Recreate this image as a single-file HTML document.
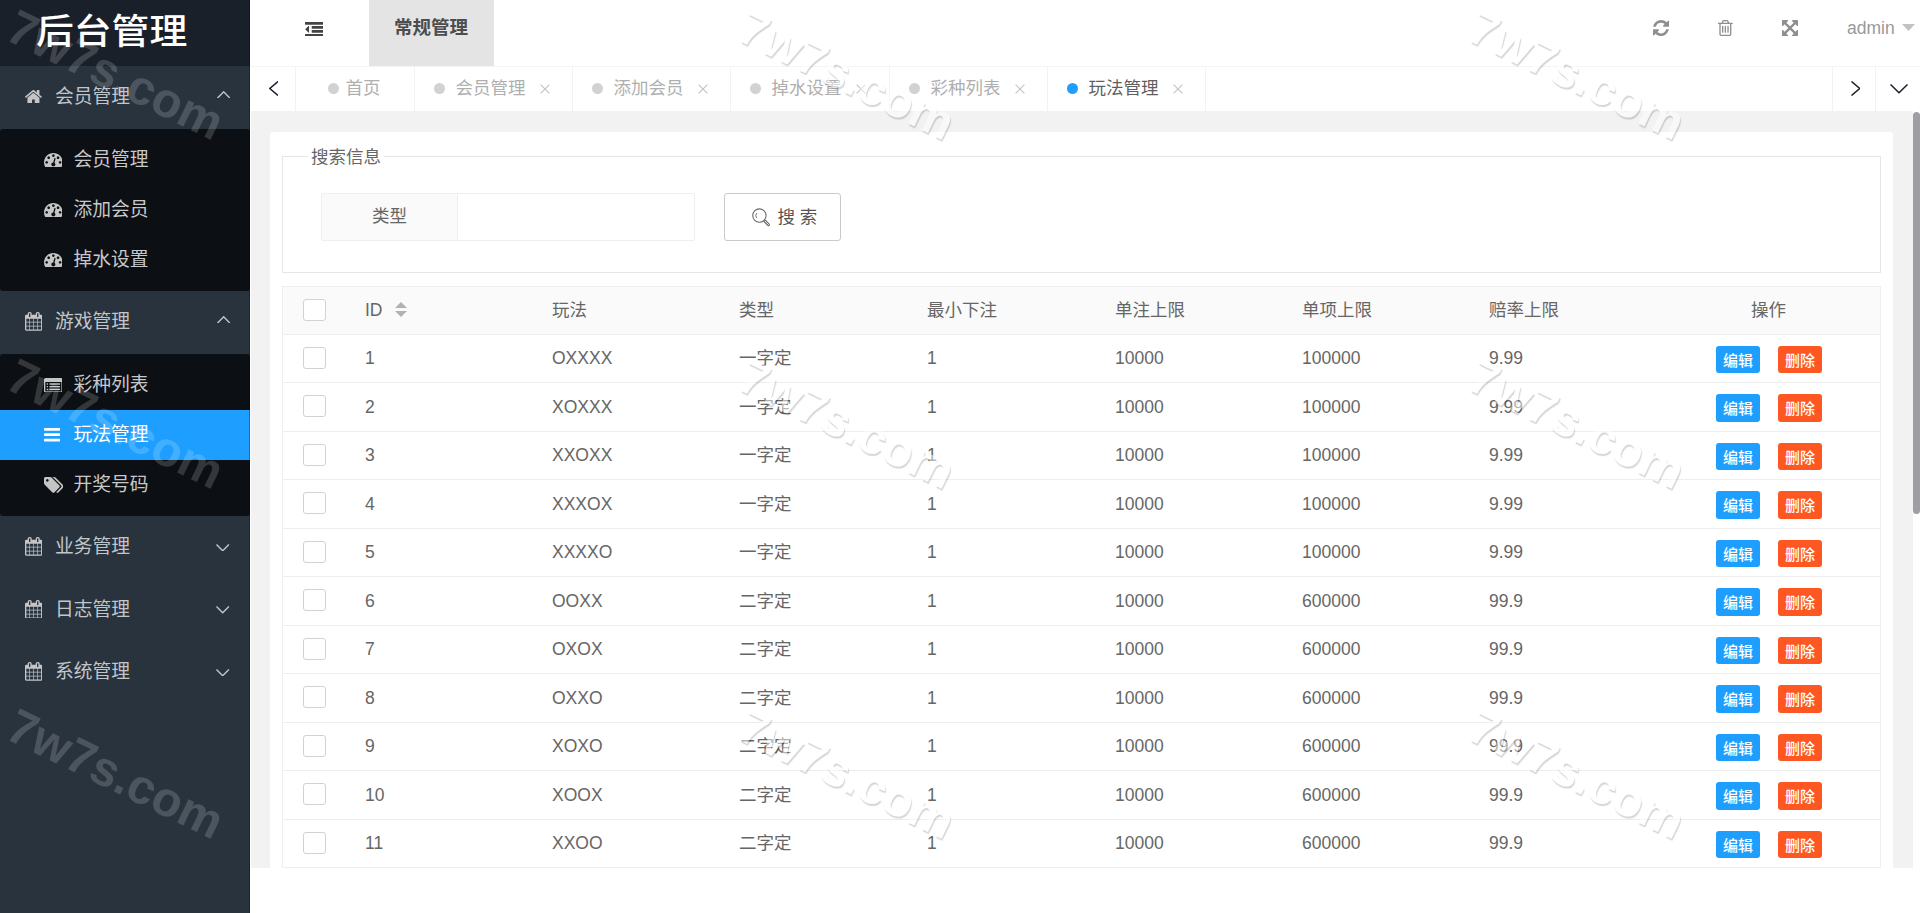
<!DOCTYPE html>
<html lang="zh-CN">
<head>
<meta charset="utf-8">
<title>后台管理</title>
<style>
*{box-sizing:border-box;margin:0;padding:0}
html,body{width:1920px;height:913px;overflow:hidden;background:#fff}
body{position:relative;font-family:"Liberation Sans","Noto Sans CJK SC",sans-serif;font-size:17.5px;color:#666}
.abs{position:absolute}
svg{display:block}
/* ---------- sidebar ---------- */
#side{position:absolute;left:0;top:0;width:250px;height:913px;background:#28333e;overflow:hidden}
#logo{position:absolute;left:0;top:0;width:250px;height:66px;background:#1a2029}
#logo span{position:absolute;left:36px;top:4.5px;font-size:37.8px;line-height:54px;color:#fff;white-space:nowrap;font-weight:500;transform:scaleY(.93);transform-origin:50% 50%}
#edge{position:absolute;left:249px;top:0;width:1px;height:913px;background:rgba(0,0,0,.3);z-index:3}
.nav1{position:absolute;left:0;width:250px;height:62.5px;color:#c3c6c9;font-size:18.75px;line-height:62.5px}
.nav1 .txt{position:absolute;left:55px;top:0;white-space:nowrap}
.nav1 .ico{position:absolute}
.nav1 .chev{position:absolute;left:217px;top:25px}
.sub{position:absolute;left:0;width:250px;height:162.5px;background:#0c0f13;border-radius:3px}
.nav2{position:absolute;left:0;width:250px;height:50px;color:#c8c8c9;font-size:18.75px;line-height:50px}
.nav2 .txt{position:absolute;left:73.5px;top:0;white-space:nowrap}
.nav2 .ico{position:absolute}
.nav2.on{background:#1e9fff;color:#fff}
/* ---------- header ---------- */
#head{position:absolute;left:250px;top:0;width:1670px;height:66px;background:#fff}
#headline{position:absolute;left:250px;top:66px;width:1670px;height:1px;background:#f4f4f4}
#topnav{position:absolute;left:118.5px;top:0;width:125px;height:66px;background:#e4e4e4;color:#4d4d4d;font-weight:bold;font-size:18.5px;line-height:56px;text-align:center}
#user{position:absolute;left:1597px;top:0;line-height:56px;color:#999;font-size:17.5px}
/* ---------- tabs ---------- */
#tabs{position:absolute;left:251px;top:67px;width:1669px;height:44px;background:#fff}
.tab{position:absolute;top:0;height:44px;border-right:1px solid #f2f2f2;color:#afafaf;font-size:17.5px;line-height:42px}
.tab .dot{position:absolute;top:16px;width:11px;height:11px;border-radius:50%;background:#d2d2d2}
.tab .t{position:absolute;top:0;white-space:nowrap}
.tab .x{position:absolute;top:17px}
.tab.on{color:#5f5f5f}
.tab.on .dot{background:#1e9fff}
.tctl{position:absolute;top:0;height:44px}
/* ---------- content ---------- */
#main{position:absolute;left:251px;top:111px;width:1662px;height:757px;background:#f2f2f2;overflow:hidden}
#card{position:absolute;left:19px;top:21px;width:1623px;height:800px;background:#fff;border-radius:3px}
#fs{position:absolute;left:12px;top:24px;width:1599px;height:117px;border:1px solid #e6e6e6}
#legend{position:absolute;left:38px;top:10.3px;padding:0 3px;background:#fff;font-size:17.5px;line-height:30px;color:#666}
#lab{position:absolute;left:51px;top:61px;width:137px;height:48px;background:#fafafa;border:1px solid #eee;border-radius:2px 0 0 2px;text-align:center;line-height:44px;color:#666}
#inp{position:absolute;left:187px;top:61px;width:238px;height:48px;background:#fff;border:1px solid #eee;border-radius:0 2px 2px 0}
#sbtn{position:absolute;left:454px;top:61px;width:117px;height:48px;background:#fff;border:1px solid #c9c9c9;border-radius:3px;color:#555}
#sbtn .t{position:absolute;left:52.5px;top:0.6px;line-height:45px;font-size:17.5px;white-space:pre}
/* table */
#tbl{position:absolute;left:12px;top:154px;width:1599px;border:1px solid #eee}
.tr{position:relative;height:48px;border-bottom:1px solid #eee;font-size:17.5px;line-height:46px;color:#666;background:#fff}
.tr.h{background:#fafafa}.tr.t{height:49px}
.tr span{position:absolute;top:0;white-space:nowrap}
.cb{position:absolute;left:20px;top:12px;width:23px;height:22px;border:1px solid #d2d2d2;border-radius:3px;background:#fff}
.c1{left:82px}.c2{left:269px}.c3{left:456px}.c4{left:644px}.c5{left:832px}.c6{left:1019px}.c7{left:1206px}
.btn{font-weight:500;position:absolute;top:11px;width:44px;height:27px;border-radius:3px;color:#fff;font-size:15px;line-height:29.4px;text-align:center}.tr.t .btn{height:28px;line-height:30.4px}.tr.t span{top:1px}
.be{left:1433px;background:#1e9fff}
.bd{left:1495px;background:#ff5722}
/* scrollbar */
#sbar{position:absolute;left:1913px;top:111px;width:7px;height:757px;background:#fff}
#thumb{position:absolute;left:0;top:1px;width:7px;height:402px;background:#9f9fa3;border-radius:4px 4px 4px 4px}
/* watermark */
.wm{position:absolute;font:bold 48.8px "Liberation Sans",sans-serif;line-height:50px;white-space:nowrap;transform-origin:0 0;transform:rotate(26deg);pointer-events:none}
.wm.d{color:rgba(255,255,255,.17)}
.wm.l{color:#fff;text-shadow:1.5px 1.5px 1px rgba(0,0,0,.32);opacity:.5}
</style>
</head>
<body>
<div id="side">
<div id="logo"><span>后台管理</span></div><div id="edge"></div>
<div class="nav1" style="top:66px"><svg class="ico" style="position:absolute;left:25.00px;top:23.69px" width="16.87" height="13.42" viewBox="25.9 253.0 1612.2 1283.0"><path d="M1408 992v480q0 26-19 45t-45 19h-384v-384h-256v384h-384q-26 0-45-19t-19-45v-480q0-1 .5-3t.5-3l575-474 575 474q1 2 1 6zm223-69l-62 74q-8 9-21 11h-3q-13 0-21-7l-692-577-692 577q-12 8-24 7-13-2-21-11l-62-74q-8-10-7-23.500t11-21.500l719-599q32-26 76-26t76 26l244 204v-195q0-14 9-23t23-9h192q14 0 23 9t9 23v408l219 182q10 8 11 21.500t-7 23.500z" fill="#c3c5c8"/></svg><span class="txt">会员管理</span><svg style="position:absolute;left:216.6px;top:24.9px" width="13.4" height="7.6" viewBox="0 0 13.4 7.6"><polyline points="0.5,7.1 6.7,0.8 12.9,7.1" fill="none" stroke="#c3c5c8" stroke-width="1.4" stroke-linejoin="miter"/></svg></div>
<div class="nav1" style="top:291px"><svg class="ico" style="position:absolute;left:24.70px;top:21.02px" width="17.41" height="18.75" viewBox="64.0 0.0 1664.0 1792.0"><path d="M192 1664h288v-288h-288v288zm352 0h320v-288h-320v288zm-352-352h288v-320h-288v320zm352 0h320v-320h-320v320zm-352-384h288v-288h-288v288zm736 736h320v-288h-320v288zm-384-736h320v-288h-320v288zm768 736h288v-288h-288v288zm-384-352h320v-320h-320v320zm-352-864v-288q0-13-9.500-22.500t-22.500-9.500h-64q-13 0-22.500 9.500t-9.500 22.500v288q0 13 9.500 22.500t22.500 9.500h64q13 0 22.500-9.500t9.500-22.500zm736 864h288v-320h-288v320zm-384-384h320v-288h-320v288zm384 0h288v-288h-288v288zm32-480v-288q0-13-9.500-22.500t-22.500-9.500h-64q-13 0-22.500 9.500t-9.500 22.500v288q0 13 9.500 22.500t22.500 9.500h64q13 0 22.500-9.500t9.500-22.500zm384-64v1280q0 52-38 90t-90 38h-1408q-52 0-90-38t-38-90v-1280q0-52 38-90t90-38h128v-96q0-66 47-113t113-47h64q66 0 113 47t47 113v96h384v-96q0-66 47-113t113-47h64q66 0 113 47t47 113v96h128q52 0 90 38t38 90z" fill="#c3c5c8"/></svg><span class="txt">游戏管理</span><svg style="position:absolute;left:216.6px;top:24.9px" width="13.4" height="7.6" viewBox="0 0 13.4 7.6"><polyline points="0.5,7.1 6.7,0.8 12.9,7.1" fill="none" stroke="#c3c5c8" stroke-width="1.4" stroke-linejoin="miter"/></svg></div>
<div class="nav1" style="top:516px"><svg class="ico" style="position:absolute;left:24.70px;top:21.02px" width="17.41" height="18.75" viewBox="64.0 0.0 1664.0 1792.0"><path d="M192 1664h288v-288h-288v288zm352 0h320v-288h-320v288zm-352-352h288v-320h-288v320zm352 0h320v-320h-320v320zm-352-384h288v-288h-288v288zm736 736h320v-288h-320v288zm-384-736h320v-288h-320v288zm768 736h288v-288h-288v288zm-384-352h320v-320h-320v320zm-352-864v-288q0-13-9.500-22.500t-22.500-9.500h-64q-13 0-22.500 9.500t-9.500 22.500v288q0 13 9.500 22.500t22.500 9.500h64q13 0 22.500-9.500t9.500-22.500zm736 864h288v-320h-288v320zm-384-384h320v-288h-320v288zm384 0h288v-288h-288v288zm32-480v-288q0-13-9.500-22.500t-22.500-9.500h-64q-13 0-22.500 9.500t-9.500 22.500v288q0 13 9.500 22.500t22.500 9.500h64q13 0 22.500-9.500t9.500-22.500zm384-64v1280q0 52-38 90t-90 38h-1408q-52 0-90-38t-38-90v-1280q0-52 38-90t90-38h128v-96q0-66 47-113t113-47h64q66 0 113 47t47 113v96h384v-96q0-66 47-113t113-47h64q66 0 113 47t47 113v96h128q52 0 90 38t38 90z" fill="#c3c5c8"/></svg><span class="txt">业务管理</span><svg style="position:absolute;left:216.2px;top:27.6px" width="13.4" height="7.6" viewBox="0 0 13.4 7.6"><polyline points="0.5,0.5 6.7,6.8 12.9,0.5" fill="none" stroke="#c3c5c8" stroke-width="1.4" stroke-linejoin="miter"/></svg></div>
<div class="nav1" style="top:578.5px"><svg class="ico" style="position:absolute;left:24.70px;top:21.02px" width="17.41" height="18.75" viewBox="64.0 0.0 1664.0 1792.0"><path d="M192 1664h288v-288h-288v288zm352 0h320v-288h-320v288zm-352-352h288v-320h-288v320zm352 0h320v-320h-320v320zm-352-384h288v-288h-288v288zm736 736h320v-288h-320v288zm-384-736h320v-288h-320v288zm768 736h288v-288h-288v288zm-384-352h320v-320h-320v320zm-352-864v-288q0-13-9.500-22.500t-22.500-9.500h-64q-13 0-22.500 9.500t-9.500 22.500v288q0 13 9.500 22.500t22.500 9.500h64q13 0 22.500-9.500t9.500-22.500zm736 864h288v-320h-288v320zm-384-384h320v-288h-320v288zm384 0h288v-288h-288v288zm32-480v-288q0-13-9.500-22.500t-22.500-9.500h-64q-13 0-22.500 9.500t-9.500 22.500v288q0 13 9.500 22.500t22.500 9.500h64q13 0 22.500-9.500t9.500-22.500zm384-64v1280q0 52-38 90t-90 38h-1408q-52 0-90-38t-38-90v-1280q0-52 38-90t90-38h128v-96q0-66 47-113t113-47h64q66 0 113 47t47 113v96h384v-96q0-66 47-113t113-47h64q66 0 113 47t47 113v96h128q52 0 90 38t38 90z" fill="#c3c5c8"/></svg><span class="txt">日志管理</span><svg style="position:absolute;left:216.2px;top:27.6px" width="13.4" height="7.6" viewBox="0 0 13.4 7.6"><polyline points="0.5,0.5 6.7,6.8 12.9,0.5" fill="none" stroke="#c3c5c8" stroke-width="1.4" stroke-linejoin="miter"/></svg></div>
<div class="nav1" style="top:641px"><svg class="ico" style="position:absolute;left:24.70px;top:21.02px" width="17.41" height="18.75" viewBox="64.0 0.0 1664.0 1792.0"><path d="M192 1664h288v-288h-288v288zm352 0h320v-288h-320v288zm-352-352h288v-320h-288v320zm352 0h320v-320h-320v320zm-352-384h288v-288h-288v288zm736 736h320v-288h-320v288zm-384-736h320v-288h-320v288zm768 736h288v-288h-288v288zm-384-352h320v-320h-320v320zm-352-864v-288q0-13-9.500-22.500t-22.500-9.500h-64q-13 0-22.500 9.500t-9.500 22.500v288q0 13 9.500 22.500t22.500 9.500h64q13 0 22.500-9.500t9.500-22.500zm736 864h288v-320h-288v320zm-384-384h320v-288h-320v288zm384 0h288v-288h-288v288zm32-480v-288q0-13-9.500-22.500t-22.500-9.500h-64q-13 0-22.500 9.500t-9.500 22.500v288q0 13 9.500 22.500t22.500 9.500h64q13 0 22.500-9.500t9.500-22.500zm384-64v1280q0 52-38 90t-90 38h-1408q-52 0-90-38t-38-90v-1280q0-52 38-90t90-38h128v-96q0-66 47-113t113-47h64q66 0 113 47t47 113v96h384v-96q0-66 47-113t113-47h64q66 0 113 47t47 113v96h128q52 0 90 38t38 90z" fill="#c3c5c8"/></svg><span class="txt">系统管理</span><svg style="position:absolute;left:216.2px;top:27.6px" width="13.4" height="7.6" viewBox="0 0 13.4 7.6"><polyline points="0.5,0.5 6.7,6.8 12.9,0.5" fill="none" stroke="#c3c5c8" stroke-width="1.4" stroke-linejoin="miter"/></svg></div>
<div class="sub" style="top:128.5px"><div class="nav2" style="top:6.25px"><svg class="ico" style="position:absolute;left:43.50px;top:17.83px" width="18.75" height="14.73" viewBox="0.0 256.0 1792.0 1408.0"><path d="M384 1152q0-53-37.500-90.500t-90.500-37.500-90.500 37.500-37.500 90.500 37.500 90.500 90.500 37.500 90.500-37.500 37.500-90.500zm192-448q0-53-37.500-90.500t-90.500-37.500-90.500 37.500-37.500 90.500 37.500 90.500 90.500 37.500 90.500-37.500 37.500-90.500zm428 481l101-382q6-26-7.500-48.500t-38.500-29.500-48 6.500-30 39.500l-101 382q-60 5-107 43.500t-63 98.500q-20 77 20 146t117 89 146-20 89-117q16-60-6-117t-72-91zm660-33q0-53-37.500-90.500t-90.500-37.500-90.500 37.500-37.500 90.500 37.500 90.500 90.500 37.500 90.500-37.500 37.500-90.500zm-640-640q0-53-37.500-90.500t-90.500-37.500-90.500 37.500-37.500 90.500 37.500 90.500 90.500 37.500 90.500-37.500 37.500-90.500zm448 192q0-53-37.500-90.500t-90.500-37.500-90.500 37.500-37.500 90.500 37.500 90.500 90.500 37.500 90.500-37.500 37.500-90.500zm320 448q0 261-141 483-19 29-54 29h-1402q-35 0-54-29-141-221-141-483 0-182 71-348t191-286 286-191 348-71 348 71 286 191 191 286 71 348z" fill="#c6c5c5"/></svg><span class="txt">会员管理</span></div><div class="nav2" style="top:56.25px"><svg class="ico" style="position:absolute;left:43.50px;top:17.83px" width="18.75" height="14.73" viewBox="0.0 256.0 1792.0 1408.0"><path d="M384 1152q0-53-37.500-90.500t-90.500-37.500-90.500 37.500-37.500 90.500 37.500 90.500 90.500 37.500 90.500-37.500 37.500-90.500zm192-448q0-53-37.500-90.500t-90.500-37.500-90.500 37.500-37.500 90.500 37.500 90.500 90.500 37.500 90.500-37.500 37.500-90.500zm428 481l101-382q6-26-7.500-48.500t-38.500-29.500-48 6.500-30 39.500l-101 382q-60 5-107 43.500t-63 98.500q-20 77 20 146t117 89 146-20 89-117q16-60-6-117t-72-91zm660-33q0-53-37.500-90.500t-90.500-37.500-90.500 37.500-37.500 90.500 37.500 90.500 90.500 37.500 90.500-37.500 37.500-90.500zm-640-640q0-53-37.500-90.500t-90.500-37.500-90.500 37.500-37.500 90.500 37.500 90.500 90.500 37.500 90.500-37.500 37.500-90.500zm448 192q0-53-37.500-90.500t-90.500-37.500-90.500 37.500-37.500 90.500 37.500 90.500 90.500 37.500 90.500-37.500 37.500-90.500zm320 448q0 261-141 483-19 29-54 29h-1402q-35 0-54-29-141-221-141-483 0-182 71-348t191-286 286-191 348-71 348 71 286 191 191 286 71 348z" fill="#c6c5c5"/></svg><span class="txt">添加会员</span></div><div class="nav2" style="top:106.25px"><svg class="ico" style="position:absolute;left:43.50px;top:17.83px" width="18.75" height="14.73" viewBox="0.0 256.0 1792.0 1408.0"><path d="M384 1152q0-53-37.500-90.500t-90.500-37.500-90.500 37.500-37.500 90.500 37.500 90.500 90.500 37.500 90.500-37.500 37.500-90.500zm192-448q0-53-37.500-90.500t-90.500-37.500-90.500 37.500-37.500 90.500 37.500 90.500 90.500 37.500 90.500-37.500 37.500-90.500zm428 481l101-382q6-26-7.500-48.500t-38.500-29.500-48 6.500-30 39.500l-101 382q-60 5-107 43.500t-63 98.500q-20 77 20 146t117 89 146-20 89-117q16-60-6-117t-72-91zm660-33q0-53-37.500-90.500t-90.500-37.500-90.500 37.500-37.500 90.500 37.500 90.500 90.500 37.500 90.500-37.500 37.500-90.500zm-640-640q0-53-37.500-90.500t-90.500-37.500-90.500 37.500-37.500 90.500 37.500 90.500 90.500 37.500 90.500-37.500 37.500-90.500zm448 192q0-53-37.500-90.500t-90.500-37.500-90.500 37.500-37.500 90.500 37.500 90.500 90.500 37.500 90.500-37.500 37.500-90.500zm320 448q0 261-141 483-19 29-54 29h-1402q-35 0-54-29-141-221-141-483 0-182 71-348t191-286 286-191 348-71 348 71 286 191 191 286 71 348z" fill="#c6c5c5"/></svg><span class="txt">掉水设置</span></div></div>
<div class="sub" style="top:353.5px"><div class="nav2" style="top:6.25px"><svg class="ico" style="position:absolute;left:43.50px;top:17.83px" width="18.75" height="14.73" viewBox="0.0 128.0 1792.0 1408.0"><path d="M384 1184v64q0 13-9.500 22.500t-22.500 9.500h-64q-13 0-22.500-9.500t-9.500-22.500v-64q0-13 9.500-22.500t22.500-9.500h64q13 0 22.500 9.500t9.500 22.500zm0-256v64q0 13-9.500 22.500t-22.500 9.500h-64q-13 0-22.500-9.500t-9.500-22.500v-64q0-13 9.500-22.500t22.500-9.500h64q13 0 22.500 9.500t9.500 22.500zm0-256v64q0 13-9.500 22.500t-22.500 9.500h-64q-13 0-22.500-9.500t-9.500-22.500v-64q0-13 9.500-22.500t22.500-9.500h64q13 0 22.500 9.500t9.500 22.500zm1152 512v64q0 13-9.500 22.500t-22.500 9.500h-960q-13 0-22.500-9.500t-9.500-22.500v-64q0-13 9.500-22.500t22.500-9.500h960q13 0 22.500 9.500t9.500 22.500zm0-256v64q0 13-9.500 22.500t-22.500 9.500h-960q-13 0-22.500-9.500t-9.500-22.500v-64q0-13 9.500-22.500t22.500-9.500h960q13 0 22.500 9.500t9.500 22.500zm0-256v64q0 13-9.500 22.500t-22.500 9.500h-960q-13 0-22.500-9.500t-9.500-22.500v-64q0-13 9.500-22.500t22.500-9.500h960q13 0 22.500 9.500t9.500 22.500zm128 704v-832q0-13-9.500-22.500t-22.500-9.500h-1472q-13 0-22.500 9.500t-9.500 22.500v832q0 13 9.500 22.500t22.500 9.500h1472q13 0 22.500-9.500t9.500-22.500zm128-1088v1088q0 66-47 113t-113 47h-1472q-66 0-113-47t-47-113v-1088q0-66 47-113t113-47h1472q66 0 113 47t47 113z" fill="#c6c5c5"/></svg><span class="txt">彩种列表</span></div><div class="nav2 on" style="top:56.25px"><svg class="ico" style="position:absolute;left:43.50px;top:18.50px" width="16.07" height="13.39" viewBox="128.0 256.0 1536.0 1280.0"><path d="M1664 1344v128q0 26-19 45t-45 19h-1408q-26 0-45-19t-19-45v-128q0-26 19-45t45-19h1408q26 0 45 19t19 45zm0-512v128q0 26-19 45t-45 19h-1408q-26 0-45-19t-19-45v-128q0-26 19-45t45-19h1408q26 0 45 19t19 45zm0-512v128q0 26-19 45t-45 19h-1408q-26 0-45-19t-19-45v-128q0-26 19-45t45-19h1408q26 0 45 19t19 45z" fill="#fff"/></svg><span class="txt">玩法管理</span></div><div class="nav2" style="top:106.25px"><svg class="ico" style="position:absolute;left:43.50px;top:17.27px" width="19.87" height="15.85" viewBox="-64.0 128.0 1899.0 1515.0"><path d="M384 448q0-53-37.500-90.500t-90.500-37.500-90.500 37.500-37.500 90.500 37.500 90.500 90.500 37.500 90.500-37.500 37.500-90.500zm1067 576q0 53-37 90l-491 492q-39 37-91 37-53 0-90-37l-715-716q-38-37-64.500-101t-26.500-117v-416q0-52 38-90t90-38h416q53 0 117 26.500t102 64.500l715 714q37 39 37 91zm384 0q0 53-37 90l-491 492q-39 37-91 37-36 0-59-14t-53-45l470-470q37-37 37-90 0-52-37-91l-715-714q-38-38-102-64.500t-117-26.500h224q53 0 117 26.500t102 64.500l715 714q37 39 37 91z" fill="#c6c5c5"/></svg><span class="txt">开奖号码</span></div></div>
<div class="wm d" style="left:22px;top:0.5px">7w7s.com</div>
<div class="wm d" style="left:22px;top:350px">7w7s.com</div>
<div class="wm d" style="left:22px;top:699.6px">7w7s.com</div>
</div>
<div id="head">
<svg class="ico" style="position:absolute;left:54.50px;top:21.50px" width="18.75" height="14.73" viewBox="0.0 128.0 1792.0 1408.0"><path d="M384 544v576q0 13-9.500 22.500t-22.500 9.500q-14 0-23-9l-288-288q-9-9-9-23t9-23l288-288q9-9 23-9 13 0 22.500 9.500t9.500 22.500zm1408 768v192q0 13-9.500 22.500t-22.500 9.500h-1728q-13 0-22.500-9.500t-9.500-22.500v-192q0-13 9.500-22.500t22.500-9.500h1728q13 0 22.500 9.500t9.500 22.500zm0-384v192q0 13-9.500 22.500t-22.500 9.500h-1088q-13 0-22.500-9.500t-9.500-22.500v-192q0-13 9.500-22.500t22.500-9.500h1088q13 0 22.500 9.500t9.500 22.500zm0-384v192q0 13-9.500 22.500t-22.500 9.500h-1088q-13 0-22.500-9.500t-9.500-22.500v-192q0-13 9.500-22.500t22.500-9.500h1088q13 0 22.500 9.500t9.500 22.500zm0-384v192q0 13-9.500 22.500t-22.500 9.500h-1728q-13 0-22.500-9.500t-9.500-22.500v-192q0-13 9.500-22.500t22.500-9.500h1728q13 0 22.500 9.500t9.500 22.500z" fill="#444"/></svg>
<div id="topnav">常规管理</div>
<svg class="ico" style="position:absolute;left:1403.00px;top:20.00px" width="16.07" height="16.07" viewBox="128.0 128.0 1536.0 1536.0"><path d="M1639 1056q0 5-1 7-64 268-268 434.500t-478 166.500q-146 0-282.500-55t-243.500-157l-129 129q-19 19-45 19t-45-19-19-45v-448q0-26 19-45t45-19h448q26 0 45 19t19 45-19 45l-137 137q71 66 161 102t187 36q134 0 250-65t186-179q11-17 53-117 8-23 30-23h192q13 0 22.500 9.500t9.500 22.500zm25-800v448q0 26-19 45t-45 19h-448q-26 0-45-19t-19-45 19-45l138-138q-148-137-349-137-134 0-250 65t-186 179q-11 17-53 117-8 23-30 23h-199q-13 0-22.500-9.500t-9.500-22.500v-7q65-268 270-434.500t480-166.500q146 0 284 55.500t245 156.500l130-129q19-19 45-19t45 19 19 45z" fill="#8f8f8f"/></svg>
<svg class="ico" style="position:absolute;left:1468.30px;top:20.00px" width="14.73" height="16.07" viewBox="192.0 128.0 1408.0 1536.0"><path d="M704 736v576q0 14-9 23t-23 9h-64q-14 0-23-9t-9-23v-576q0-14 9-23t23-9h64q14 0 23 9t9 23zm256 0v576q0 14-9 23t-23 9h-64q-14 0-23-9t-9-23v-576q0-14 9-23t23-9h64q14 0 23 9t9 23zm256 0v576q0 14-9 23t-23 9h-64q-14 0-23-9t-9-23v-576q0-14 9-23t23-9h64q14 0 23 9t9 23zm128 724v-948h-896v948q0 22 7 40.500t14.500 27 10.500 8.500h832q3 0 10.500-8.500t14.500-27 7-40.500zm-672-1076h448l-48-117q-7-9-17-11h-317q-10 2-17 11zm928 32v64q0 14-9 23t-23 9h-96v948q0 83-47 143.500t-113 60.500h-832q-66 0-113-58.500t-47-141.500v-952h-96q-14 0-23-9t-9-23v-64q0-14 9-23t23-9h309l70-167q15-37 54-63t79-26h320q40 0 79 26t54 63l70 167h309q14 0 23 9t9 23z" fill="#8f8f8f"/></svg>
<svg class="ico" style="position:absolute;left:1531.80px;top:20.00px" width="16.07" height="16.07" viewBox="0.0 0.0 1536.0 1536.0"><path d="M1283 413l-355 355 355 355 144-144q29-31 70-14 39 17 39 59v448q0 26-19 45t-45 19h-448q-42 0-59-40-17-39 14-69l144-144-355-355-355 355 144 144q31 30 14 69-17 40-59 40h-448q-26 0-45-19t-19-45v-448q0-42 40-59 39-17 69 14l144 144 355-355-355-355-144 144q-19 19-45 19-12 0-24-5-40-17-40-59v-448q0-26 19-45t45-19h448q42 0 59 40 17 39-14 69l-144 144 355 355 355-355-144-144q-31-30-14-69 17-40 59-40h448q26 0 45 19t19 45v448q0 42-39 59-13 5-25 5-26 0-45-19z" fill="#8f8f8f"/></svg>
<div id="user">admin</div>
<svg style="position:absolute;left:1652px;top:24px" width="13" height="7" viewBox="0 0 13 7"><polygon points="0,0 13,0 6.5,7" fill="#c2c2c2"/></svg>
</div>
<div id="headline"></div>
<div id="tabs">
<div class="tctl" style="left:0;width:45px;border-right:1px solid #f2f2f2"><svg style="position:absolute;left:17.5px;top:14px" width="9.5" height="15" viewBox="0 0 9.5 15"><polyline points="9.0,0.5 0.8,7.5 9.0,14.5" fill="none" stroke="#1c1c28" stroke-width="1.5" stroke-linejoin="miter"/></svg></div>
<div class="tab" style="left:45px;width:119px"><i class="dot" style="left:32px"></i><span class="t" style="left:49.5px">首页</span></div>
<div class="tab" style="left:164px;width:158px"><i class="dot" style="left:18.5px"></i><span class="t" style="left:40.5px">会员管理</span><svg class="x" style="left:124.5px" width="10" height="10" viewBox="0 0 10 10"><path d="M0.6 0.6L9.4 9.4M9.4 0.6L0.6 9.4" stroke="#c2c2c2" stroke-width="1.1" fill="none"/></svg></div>
<div class="tab" style="left:322px;width:158px"><i class="dot" style="left:18.5px"></i><span class="t" style="left:40.5px">添加会员</span><svg class="x" style="left:124.5px" width="10" height="10" viewBox="0 0 10 10"><path d="M0.6 0.6L9.4 9.4M9.4 0.6L0.6 9.4" stroke="#c2c2c2" stroke-width="1.1" fill="none"/></svg></div>
<div class="tab" style="left:480px;width:159px"><i class="dot" style="left:18.5px"></i><span class="t" style="left:40.5px">掉水设置</span><svg class="x" style="left:124.5px" width="10" height="10" viewBox="0 0 10 10"><path d="M0.6 0.6L9.4 9.4M9.4 0.6L0.6 9.4" stroke="#c2c2c2" stroke-width="1.1" fill="none"/></svg></div>
<div class="tab" style="left:639px;width:158px"><i class="dot" style="left:18.5px"></i><span class="t" style="left:40.5px">彩种列表</span><svg class="x" style="left:124.5px" width="10" height="10" viewBox="0 0 10 10"><path d="M0.6 0.6L9.4 9.4M9.4 0.6L0.6 9.4" stroke="#c2c2c2" stroke-width="1.1" fill="none"/></svg></div>
<div class="tab on" style="left:797px;width:158px"><i class="dot" style="left:18.5px"></i><span class="t" style="left:40.5px">玩法管理</span><svg class="x" style="left:124.5px" width="10" height="10" viewBox="0 0 10 10"><path d="M0.6 0.6L9.4 9.4M9.4 0.6L0.6 9.4" stroke="#c2c2c2" stroke-width="1.1" fill="none"/></svg></div>
<div class="tctl" style="left:1581px;width:44px;border-left:1px solid #f2f2f2;border-right:1px solid #f2f2f2"><svg style="position:absolute;left:17.5px;top:14px" width="9.5" height="15" viewBox="0 0 9.5 15"><polyline points="0.5,0.5 8.7,7.5 0.5,14.5" fill="none" stroke="#1c1c28" stroke-width="1.5" stroke-linejoin="miter"/></svg></div>
<div class="tctl" style="left:1625px;width:44px"><svg style="position:absolute;left:13.5px;top:17px" width="18" height="9.5" viewBox="0 0 18 9.5"><polyline points="0.5,0.5 9.0,8.7 17.5,0.5" fill="none" stroke="#1c1c28" stroke-width="1.5" stroke-linejoin="miter"/></svg></div>
</div>
<div id="main"><div id="card">
<div id="fs"></div><div id="legend">搜索信息</div>
<div id="lab">类型</div><div id="inp"></div>
<div id="sbtn"><svg style="position:absolute;left:26.5px;top:13.7px" width="20" height="20" viewBox="0 0 20 20"><circle cx="7.4" cy="7.6" r="6.7" fill="none" stroke="#6a6a6a" stroke-width="1.1"/><path d="M12.9 13.1L16.5 16.7" stroke="#6a6a6a" stroke-width="3" stroke-linecap="round"/><path d="M13 13.2L16.4 16.6" stroke="#fff" stroke-width="1" stroke-linecap="round"/><path d="M4.6 10a3.9 3.9 0 0 1 0.3-5" stroke="#6a6a6a" stroke-width="0.9" fill="none"/></svg><span class="t">搜 索</span></div>
<div id="tbl"><div class="tr h"><i class="cb"></i><span class="c1">ID</span><svg style="position:absolute;left:112px;top:15px" width="12" height="15" viewBox="0 0 12 15"><polygon points="6,0 12,6 0,6" fill="#b2b2b2"/><polygon points="0,9 12,9 6,15" fill="#b2b2b2"/></svg><span class="c2">玩法</span><span class="c3">类型</span><span class="c4">最小下注</span><span class="c5">单注上限</span><span class="c6">单项上限</span><span class="c7">赔率上限</span><span style="left:1468px">操作</span></div><div class="tr"><i class="cb"></i><span class="c1">1</span><span class="c2">OXXXX</span><span class="c3">一字定</span><span class="c4">1</span><span class="c5">10000</span><span class="c6">100000</span><span class="c7">9.99</span><a class="btn be">编辑</a><a class="btn bd">删除</a></div><div class="tr t"><i class="cb"></i><span class="c1">2</span><span class="c2">XOXXX</span><span class="c3">一字定</span><span class="c4">1</span><span class="c5">10000</span><span class="c6">100000</span><span class="c7">9.99</span><a class="btn be">编辑</a><a class="btn bd">删除</a></div><div class="tr"><i class="cb"></i><span class="c1">3</span><span class="c2">XXOXX</span><span class="c3">一字定</span><span class="c4">1</span><span class="c5">10000</span><span class="c6">100000</span><span class="c7">9.99</span><a class="btn be">编辑</a><a class="btn bd">删除</a></div><div class="tr t"><i class="cb"></i><span class="c1">4</span><span class="c2">XXXOX</span><span class="c3">一字定</span><span class="c4">1</span><span class="c5">10000</span><span class="c6">100000</span><span class="c7">9.99</span><a class="btn be">编辑</a><a class="btn bd">删除</a></div><div class="tr"><i class="cb"></i><span class="c1">5</span><span class="c2">XXXXO</span><span class="c3">一字定</span><span class="c4">1</span><span class="c5">10000</span><span class="c6">100000</span><span class="c7">9.99</span><a class="btn be">编辑</a><a class="btn bd">删除</a></div><div class="tr t"><i class="cb"></i><span class="c1">6</span><span class="c2">OOXX</span><span class="c3">二字定</span><span class="c4">1</span><span class="c5">10000</span><span class="c6">600000</span><span class="c7">99.9</span><a class="btn be">编辑</a><a class="btn bd">删除</a></div><div class="tr"><i class="cb"></i><span class="c1">7</span><span class="c2">OXOX</span><span class="c3">二字定</span><span class="c4">1</span><span class="c5">10000</span><span class="c6">600000</span><span class="c7">99.9</span><a class="btn be">编辑</a><a class="btn bd">删除</a></div><div class="tr t"><i class="cb"></i><span class="c1">8</span><span class="c2">OXXO</span><span class="c3">二字定</span><span class="c4">1</span><span class="c5">10000</span><span class="c6">600000</span><span class="c7">99.9</span><a class="btn be">编辑</a><a class="btn bd">删除</a></div><div class="tr"><i class="cb"></i><span class="c1">9</span><span class="c2">XOXO</span><span class="c3">二字定</span><span class="c4">1</span><span class="c5">10000</span><span class="c6">600000</span><span class="c7">99.9</span><a class="btn be">编辑</a><a class="btn bd">删除</a></div><div class="tr t"><i class="cb"></i><span class="c1">10</span><span class="c2">XOOX</span><span class="c3">二字定</span><span class="c4">1</span><span class="c5">10000</span><span class="c6">600000</span><span class="c7">99.9</span><a class="btn be">编辑</a><a class="btn bd">删除</a></div><div class="tr"><i class="cb"></i><span class="c1">11</span><span class="c2">XXOO</span><span class="c3">二字定</span><span class="c4">1</span><span class="c5">10000</span><span class="c6">600000</span><span class="c7">99.9</span><a class="btn be">编辑</a><a class="btn bd">删除</a></div></div>
</div></div>
<div id="sbar"><div id="thumb"></div></div>
<div id="below"></div>
<div class="wm l" style="left:752.5px;top:0.5px">7w7s.com</div>
<div class="wm l" style="left:752.5px;top:350px">7w7s.com</div>
<div class="wm l" style="left:752.5px;top:699.6px">7w7s.com</div>
<div class="wm l" style="left:1482.5px;top:0.5px">7w7s.com</div>
<div class="wm l" style="left:1482.5px;top:350px">7w7s.com</div>
<div class="wm l" style="left:1482.5px;top:699.6px">7w7s.com</div>
</body>
</html>
